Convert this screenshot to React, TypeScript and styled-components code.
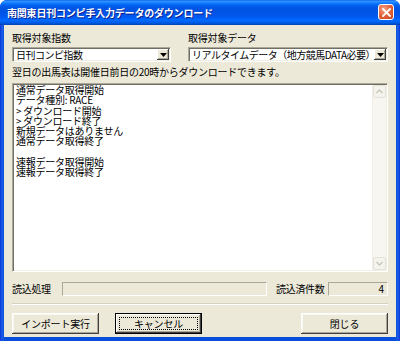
import React from "react";
import styled, { createGlobalStyle } from "styled-components";

const FONT = `"Noto Sans CJK JP", "Noto Sans CJK SC", sans-serif`;

const GlobalStyle = createGlobalStyle`
  html, body { margin: 0; padding: 0; background: #ffffff; }
  body { font-family: ${FONT}; }
  * { box-sizing: border-box; }
`;

const Window = styled.div`
  width: 400px;
  height: 341px;
  display: flex;
  flex-direction: column;
  background: linear-gradient(to right, #0831d9 0px, #1c5fe8 2px, #0a4fdc 4px, #0a4fdc 396px, #1c5fe8 398px, #0831d9 400px);
  border-radius: 7px 7px 0 0;
  overflow: hidden;
  font-family: ${FONT};
  color: #000;
`;

const TitleBar = styled.div`
  height: 25px;
  flex: none;
  display: flex;
  align-items: center;
  justify-content: space-between;
  padding: 0 6px 0 7px;
  background: linear-gradient(
    to bottom,
    #0058ee 0%,
    #3593ff 4%,
    #288eff 8%,
    #127dff 12%,
    #036ffc 16%,
    #0262ee 22%,
    #0057e5 30%,
    #0054e3 40%,
    #0055eb 60%,
    #005bf5 70%,
    #026afe 80%,
    #0062ef 88%,
    #0052d6 94%,
    #0040ab 100%
  );
`;

const Title = styled.span`
  color: #ffffff;
  font-weight: bold;
  font-size: 10px;
  letter-spacing: -0.2px;
  text-shadow: 1px 1px 0 #0a1f8f;
  white-space: nowrap;
`;

const CloseButton = styled.div`
  width: 16px;
  height: 16px;
  border: 1px solid #ffffff;
  border-radius: 3px;
  background: radial-gradient(circle at 35% 30%, #f4a386 0%, #e4663f 45%, #c9401b 100%);
  display: flex;
  align-items: center;
  justify-content: center;
  margin-top: -1px;
`;

const Body = styled.div`
  margin: 0 4px 4px;
  height: 312px;
  background: #ece9d8;
  padding: 7px 8px 3px;
  display: flex;
  flex-direction: column;
`;

const TopGrid = styled.div`
  display: grid;
  grid-template-columns: 159px 200px;
  column-gap: 17px;
`;

const FieldGroup = styled.div`
  display: flex;
  flex-direction: column;
  gap: 3px;
`;

const Label = styled.div`
  font-size: 10px;
  line-height: 12px;
  height: 12px;
  letter-spacing: -0.2px;
  white-space: nowrap;
`;

const Combo = styled.div`
  height: 15px;
  display: flex;
  align-items: center;
  background: #ffffff;
  border-top: 1px solid #aca899;
  border-left: 1px solid #aca899;
  border-right: 1px solid #ffffff;
  border-bottom: 1px solid #ffffff;
  box-shadow: inset 1px 1px 0 #716f64, inset -1px -1px 0 #f1efe2;
  padding: 0 1px 0 3px;
`;

const ComboText = styled.span`
  flex: 1;
  min-width: 0;
  font-size: 10px;
  line-height: 13px;
  letter-spacing: -0.5px;
  white-space: nowrap;
`;

const DropButton = styled.div`
  width: 12px;
  height: 11px;
  flex: none;
  background: #ece9d8;
  box-shadow: inset -1px -1px 0 #404040, inset 1px 1px 0 #ffffff, inset -2px -2px 0 #aca899;
  display: flex;
  align-items: center;
  justify-content: center;
`;

const InfoText = styled.div`
  margin-top: 4px;
  font-size: 10px;
  line-height: 12px;
  height: 12px;
  letter-spacing: -0.25px;
  white-space: nowrap;
`;

const LogBox = styled.div`
  margin-top: 5px;
  height: 189px;
  flex: none;
  display: flex;
  background: #ffffff;
  border-top: 1px solid #aca899;
  border-left: 1px solid #aca899;
  border-right: 1px solid #ffffff;
  border-bottom: 1px solid #ffffff;
  box-shadow: inset 1px 1px 0 #716f64, inset -1px -1px 0 #f1efe2;
  padding: 1px;
`;

const LogText = styled.pre`
  flex: 1;
  margin: 0;
  padding: 0 2px;
  font-family: ${FONT};
  font-size: 10px;
  line-height: 10.25px;
  letter-spacing: -0.25px;
  white-space: pre;
`;

const ScrollTrack = styled.div`
  width: 14px;
  flex: none;
  display: flex;
  flex-direction: column;
  justify-content: space-between;
  background: #f7f6f1;
  border-left: 1px solid #f0efe8;
`;

const ArrowButton = styled.div`
  width: 13px;
  height: 13px;
  border: 1px solid #e4e2d8;
  border-radius: 2px;
  background: #f4f3ee;
  display: flex;
  align-items: center;
  justify-content: center;
`;

const StatusRow = styled.div`
  margin-top: 10px;
  height: 14px;
  display: flex;
  align-items: center;
`;

const StatusLabel = styled.div<{ $width: number; $gap?: number }>`
  width: ${(p) => p.$width}px;
  margin-left: ${(p) => p.$gap ?? 0}px;
  font-size: 10px;
  line-height: 12px;
  letter-spacing: -0.3px;
  white-space: nowrap;
`;

const StatusField = styled.div<{ $width: number; $gap?: number }>`
  width: ${(p) => p.$width}px;
  margin-left: ${(p) => p.$gap ?? 0}px;
  height: 14px;
  border-top: 1px solid #aca899;
  border-left: 1px solid #aca899;
  border-right: 1px solid #ffffff;
  border-bottom: 1px solid #ffffff;
  font-size: 10px;
  line-height: 12px;
  text-align: right;
  padding-right: 3px;
`;

const Separator = styled.div`
  margin-top: 7px;
  height: 2px;
  border-top: 1px solid #d6d2c2;
  border-bottom: 1px solid #ffffff;
`;

const ButtonRow = styled.div`
  margin-top: 8px;
  display: flex;
  align-items: center;
  gap: 16px;
`;

const Spacer = styled.div`
  flex: 1;
`;

const Button = styled.div<{ $isDefault?: boolean }>`
  width: 87px;
  height: 21px;
  display: flex;
  align-items: center;
  justify-content: center;
  position: relative;
  background: #ece9d8;
  font-size: 10px;
  letter-spacing: -0.2px;
  border: ${(p) => (p.$isDefault ? "1px solid #000000" : "none")};
  box-shadow: ${(p) =>
    p.$isDefault
      ? "inset -1px -1px 0 #404040, inset 1px 1px 0 #ffffff, inset -2px -2px 0 #aca899"
      : "inset -1px -1px 0 #404040, inset 1px 1px 0 #ffffff, inset -2px -2px 0 #aca899, inset 2px 2px 0 #f8f7f0"};
`;

const FocusRing = styled.span`
  position: absolute;
  inset: 3px;
  border: 1px dotted #000000;
  pointer-events: none;
`;

const Triangle = () => (
  <svg width="7" height="4" viewBox="0 0 7 4">
    <path d="M0 0 H7 L3.5 4 Z" fill="#000" />
  </svg>
);

const Chevron = ({ up }: { up?: boolean }) => (
  <svg width="7" height="5" viewBox="0 0 7 5">
    <path
      d={up ? "M0.5 4 L3.5 1 L6.5 4" : "M0.5 1 L3.5 4 L6.5 1"}
      fill="none"
      stroke="#c9c6b8"
      strokeWidth="1.4"
    />
  </svg>
);

const logLines = [
  "通常データ取得開始",
  "データ種別: RACE",
  "> ダウンロード開始",
  "> ダウンロード終了",
  "新規データはありません",
  "通常データ取得終了",
  "",
  "速報データ取得開始",
  "速報データ取得終了",
];

export default function App() {
  return (
    <>
      <GlobalStyle />
      <Window>
        <TitleBar>
          <Title>南関東日刊コンピ手入力データのダウンロード</Title>
          <CloseButton>
            <svg width="9" height="9" viewBox="0 0 9 9">
              <path d="M1 1 L8 8 M8 1 L1 8" stroke="#fff" strokeWidth="1.8" strokeLinecap="square" />
            </svg>
          </CloseButton>
        </TitleBar>
        <Body>
          <TopGrid>
            <FieldGroup>
              <Label>取得対象指数</Label>
              <Combo>
                <ComboText>日刊コンピ指数</ComboText>
                <DropButton>
                  <Triangle />
                </DropButton>
              </Combo>
            </FieldGroup>
            <FieldGroup>
              <Label>取得対象データ</Label>
              <Combo>
                <ComboText>リアルタイムデータ（地方競馬DATA必要）</ComboText>
                <DropButton>
                  <Triangle />
                </DropButton>
              </Combo>
            </FieldGroup>
          </TopGrid>
          <InfoText>翌日の出馬表は開催日前日の20時からダウンロードできます。</InfoText>
          <LogBox>
            <LogText>{logLines.join("\n")}</LogText>
            <ScrollTrack>
              <ArrowButton>
                <Chevron up />
              </ArrowButton>
              <ArrowButton>
                <Chevron />
              </ArrowButton>
            </ScrollTrack>
          </LogBox>
          <StatusRow>
            <StatusLabel $width={50}>読込処理</StatusLabel>
            <StatusField $width={205} />
            <StatusLabel $width={50} $gap={9}>読込済件数</StatusLabel>
            <StatusField $width={60} $gap={2}>4</StatusField>
          </StatusRow>
          <Separator />
          <ButtonRow>
            <Button>インポート実行</Button>
            <Button $isDefault>
              キャンセル
              <FocusRing />
            </Button>
            <Spacer />
            <Button>閉じる</Button>
          </ButtonRow>
        </Body>
      </Window>
    </>
  );
}
